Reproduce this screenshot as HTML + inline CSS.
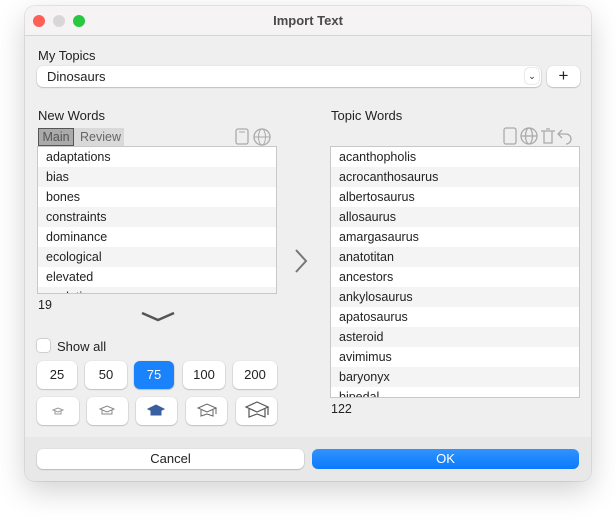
<!DOCTYPE html>
<html><head><style>
body{margin:0;width:616px;height:524px;background:#fff;font-family:"Liberation Sans",sans-serif;font-size:12.5px;color:#222;position:relative;overflow:hidden}
.a{position:absolute}
.win{left:25px;top:6px;width:566px;height:475px;background:#f0eff0;border-radius:10px;box-shadow:0 10px 30px rgba(0,0,0,.18),0 0 0 1px rgba(0,0,0,.08);overflow:hidden}
.list{background:#fff;border:1px solid #c8c8c8;overflow:hidden}
.row{height:20px;line-height:20px;padding-left:8px}
.row:nth-child(even){background:#f4f4f4}
.btn{background:#fff;border-radius:6px;box-shadow:0 0.5px 1.5px rgba(0,0,0,.35);text-align:center}
</style></head><body>
<div class="a win">
 <div class="a" style="left:0;top:0;width:566px;height:29px;background:#f5f3f4;border-bottom:1px solid #d6d4d5"></div>
 <div class="a" style="left:8px;top:9px;width:12px;height:12px;border-radius:50%;background:#fe5f57"></div>
 <div class="a" style="left:28px;top:9px;width:12px;height:12px;border-radius:50%;background:#d8d6d7"></div>
 <div class="a" style="left:48px;top:9px;width:12px;height:12px;border-radius:50%;background:#29c840"></div>
 <div class="a" style="left:0;width:566px;top:7px;text-align:center;font-weight:bold;font-size:13px;color:#4a4a4a">Import Text</div>
 <div class="a" style="left:0;top:431px;width:566px;height:44px;background:#e9e8e9"></div>
</div>
<div class="a" style="left:38px;top:48px;font-size:13px">My Topics</div>
<div class="a btn" style="left:37px;top:66px;width:504px;height:21px;text-align:left"><span style="position:absolute;left:10px;top:3px;font-size:13px">Dinosaurs</span>
 <div class="a" style="right:2px;top:2px;width:14px;height:16px;border-radius:4px;box-shadow:0 0 1px rgba(0,0,0,.5);font-size:9px;line-height:16px;text-align:center">&#x2304;</div></div>
<div class="a btn" style="left:547px;top:66px;width:33px;height:21px;line-height:20px;font-size:17px">+</div>

<div class="a" style="left:38px;top:108px;font-size:13px">New Words</div>
<div class="a" style="left:38px;top:128px;width:86px;height:18px;background:#d9d9d9"></div>
<div class="a" style="left:38px;top:128px;width:34px;height:16px;border:1px solid #555;background:#aaa;color:#555;line-height:16px;text-align:center">Main</div>
<div class="a" style="left:80px;top:129px;color:#666;line-height:16px">Review</div>
<svg class="a" style="left:234px;top:127px" width="40" height="20"><rect x="2" y="2" width="12" height="15" rx="2" fill="none" stroke="#aaa" stroke-width="1.3"/><line x1="5" y1="5" x2="11" y2="5" stroke="#aaa"/><circle cx="28" cy="10" r="8" fill="none" stroke="#aaa" stroke-width="1.3"/><ellipse cx="28" cy="10" rx="3.5" ry="8" fill="none" stroke="#aaa"/><line x1="20" y1="10" x2="36" y2="10" stroke="#aaa"/></svg>
<div class="a list" style="left:37px;top:146px;width:238px;height:146px">
 <div class="row">adaptations</div><div class="row">bias</div><div class="row">bones</div><div class="row">constraints</div><div class="row">dominance</div><div class="row">ecological</div><div class="row">elevated</div><div class="row">evolution</div></div>
<div class="a" style="left:38px;top:298px">19</div>
<svg class="a" style="left:140px;top:311px" width="36" height="12"><path d="M2 2 L18 9 L34 2" fill="none" stroke="#555" stroke-width="2.5"/></svg>
<div class="a" style="left:37px;top:339px;width:13px;height:13px;border-radius:3px;background:#fff;box-shadow:0 0 1.5px rgba(0,0,0,.5)"></div>
<div class="a" style="left:57px;top:339px;font-size:13px">Show all</div>
<div class="a btn" style="left:37px;top:361px;width:40px;height:28px;line-height:28px;font-size:13px">25</div>
<div class="a btn" style="left:85px;top:361px;width:42px;height:28px;line-height:28px;font-size:13px">50</div>
<div class="a btn" style="left:134px;top:361px;width:40px;height:28px;line-height:28px;font-size:13px;background:#1a82fb;color:#fff">75</div>
<div class="a btn" style="left:183px;top:361px;width:42px;height:28px;line-height:28px;font-size:13px">100</div>
<div class="a btn" style="left:233px;top:361px;width:44px;height:28px;line-height:28px;font-size:13px">200</div>
<div class="a btn" style="left:37px;top:397px;width:42px;height:28px"></div>
<div class="a btn" style="left:87px;top:397px;width:41px;height:28px"></div>
<div class="a btn" style="left:136px;top:397px;width:41px;height:28px"></div>
<div class="a btn" style="left:186px;top:397px;width:41px;height:28px"></div>
<div class="a btn" style="left:236px;top:397px;width:41px;height:28px"></div>
<svg class="a" style="left:37px;top:397px" width="240" height="28">
 <g fill="none" stroke="#999" stroke-width="1"><path d="M16 13 L21 11 L26 13 L21 15Z M18 14 v3 h6 v-3"/></g>
 <g fill="none" stroke="#888" stroke-width="1"><path d="M63 12 L70 9 L77 12 L70 15Z M65 13 v4 h10 v-4"/></g>
 <g fill="#3a5fa0" stroke="#3a5fa0"><path d="M111 12 L119 8 L127 12 L119 16Z"/><path d="M114 14 v4 h10 v-4"/></g>
 <g fill="none" stroke="#666" stroke-width="1"><path d="M161 11 L170 7 L179 11 L170 15Z M164 13 v6 l6 -2 l6 2 v-6 M179 11 v6"/></g>
 <g fill="none" stroke="#555" stroke-width="1.2"><path d="M209 10 L220 5 L231 10 L220 15Z M212 12 v8 l8 -3 l8 3 v-8 M231 10 v8"/></g>
</svg>
<svg class="a" style="left:290px;top:246px" width="20" height="30"><path d="M6 4 L16 15 L6 26" fill="none" stroke="#777" stroke-width="2"/></svg>

<div class="a" style="left:331px;top:108px;font-size:13px">Topic Words</div>
<svg class="a" style="left:502px;top:126px" width="78" height="20"><g fill="none" stroke="#aaa" stroke-width="1.3"><rect x="2" y="2" width="12" height="16" rx="2"/><circle cx="27" cy="10" r="8"/><ellipse cx="27" cy="10" rx="3.5" ry="8"/><line x1="19" y1="10" x2="35" y2="10"/><path d="M39 5 h14 M42 5 v12 h8 v-12 M44 3 h4"/><path d="M60 4 L56 8 L60 12 M56 8 h8 a5 5 0 0 1 0 10"/></g></svg>
<div class="a list" style="left:330px;top:146px;width:248px;height:250px">
 <div class="row">acanthopholis</div><div class="row">acrocanthosaurus</div><div class="row">albertosaurus</div><div class="row">allosaurus</div><div class="row">amargasaurus</div><div class="row">anatotitan</div><div class="row">ancestors</div><div class="row">ankylosaurus</div><div class="row">apatosaurus</div><div class="row">asteroid</div><div class="row">avimimus</div><div class="row">baryonyx</div><div class="row">bipedal</div></div>
<div class="a" style="left:331px;top:402px">122</div>

<div class="a btn" style="left:37px;top:449px;width:267px;height:20px;line-height:20px;font-size:13px">Cancel</div>
<div class="a btn" style="left:312px;top:449px;width:267px;height:20px;line-height:20px;font-size:13px;background:linear-gradient(#3193fd,#0a7afc);color:#fff;box-shadow:none">OK</div>
</body></html>
